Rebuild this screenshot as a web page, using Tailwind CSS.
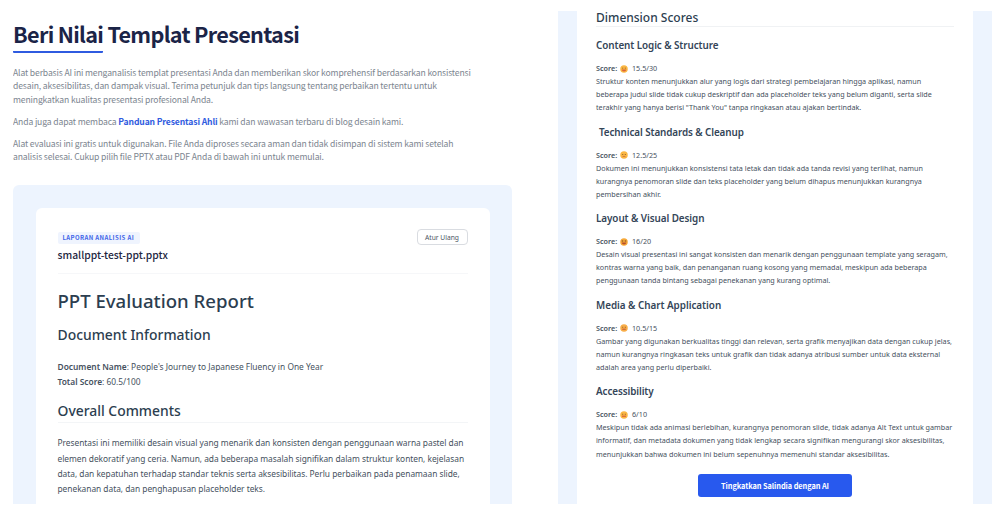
<!DOCTYPE html>
<html lang="id">
<head>
    <meta charset="UTF-8">
    <meta name="viewport" content="width=device-width, initial-scale=1.0">
    <title>Beri Nilai Templat Presentasi</title>
    <script src="https://cdn.jsdelivr.net/npm/@tailwindcss/browser@4"></script>
</head>
<body class="bg-white w-[1000px] h-[512px] overflow-hidden flex font-['Noto_Sans',sans-serif] text-[#46515e] whitespace-nowrap">
    <!-- Kolom kiri -->
    <main class="w-[499px] h-[504px] ml-[13px] flex flex-col overflow-hidden">
        <section class="h-[185px] shrink-0 pt-[18px] font-['Noto_Sans_CJK_SC',sans-serif]">
            <h1 class="flex text-[21.6px] leading-[32px] font-bold tracking-[-0.68px] text-[#1b2447]">
                <span class="h-[35px] border-b-[2px] border-[#2f5be0] rounded-b-[1px]">Beri Nilai</span><span class="whitespace-pre"> Templat Presentasi</span>
            </h1>
            <div class="mt-[13px] text-[8.6px] leading-[13.4px] tracking-[-0.135px] text-[#7c858f]">
                <p>Alat berbasis AI ini menganalisis templat presentasi Anda dan memberikan skor komprehensif berdasarkan konsistensi<br>desain, aksesibilitas, dan dampak visual. Terima petunjuk dan tips langsung tentang perbaikan tertentu untuk<br>meningkatkan kualitas presentasi profesional Anda.</p>
                <p class="mt-[8.6px]">Anda juga dapat membaca <a href="#" class="font-bold text-[#2f5be0]">Panduan Presentasi Ahli</a> kami dan wawasan terbaru di blog desain kami.</p>
                <p class="mt-[8.6px]">Alat evaluasi ini gratis untuk digunakan. File Anda diproses secara aman dan tidak disimpan di sistem kami setelah<br>analisis selesai. Cukup pilih file PPTX atau PDF Anda di bawah ini untuk memulai.</p>
            </div>
        </section>
        <section class="flex-1 bg-[#edf4fe] rounded-t-[6px] pt-[23px] px-[22.5px]">
            <div class="h-full bg-white rounded-t-[6px] pt-[21px] px-[22px]">
                <header class="h-[45px] flex justify-between border-b border-[#f6f7f9]">
                    <div class="font-['Noto_Sans_CJK_SC',sans-serif]">
                        <div class="mt-[3px] w-[82px] h-[12px] pl-[5px] rounded-[2px] bg-[#eff4fe] text-[6px] leading-[12px] font-bold tracking-[0.4px] text-[#3f66e8]">LAPORAN ANALISIS AI</div>
                        <div class="mt-[3px] text-[10.3px] leading-[16px] font-medium text-[#23263f]">smallppt-test-ppt.pptx</div>
                    </div>
                    <button class="w-[51px] h-[16px] rounded-[4px] border border-[#d9dce1] text-[6.7px] leading-[13px] text-[#4b5563]">Atur Ulang</button>
                </header>
                <h2 class="mt-[13px] text-[18.6px] leading-[28px] font-medium text-[#2c3e50]">PPT Evaluation Report</h2>
                <h3 class="mt-[9px] h-[24px] text-[13.9px] leading-[22px] font-medium text-[#2c3e50]">Document Information</h3>
                <p class="mt-[11px] text-[8.4px] leading-[15.2px]"><b class="font-semibold">Document Name</b>: People's Journey to Japanese Fluency in One Year<br><b class="font-semibold">Total Score</b>: 60.5/100</p>
                <h3 class="mt-[11px] h-[23px] border-b border-[#f3f5f7] text-[13.9px] leading-[22px] font-medium text-[#2c3e50]">Overall Comments</h3>
                <p class="mt-[12px] text-[8.4px] leading-[15.2px] tracking-[-0.03px]">Presentasi ini memiliki desain visual yang menarik dan konsisten dengan penggunaan warna pastel dan<br>elemen dekoratif yang ceria. Namun, ada beberapa masalah signifikan dalam struktur konten, kejelasan<br>data, dan kepatuhan terhadap standar teknis serta aksesibilitas. Perlu perbaikan pada penamaan slide,<br>penekanan data, dan penghapusan placeholder teks.</p>
            </div>
        </section>
    </main>

    <!-- Kolom kanan -->
    <aside class="w-[434px] h-[493px] ml-[46px] mt-[11px] px-[19px] bg-[#edf4fe]">
        <div class="h-full bg-white px-[19px] flex flex-col">
            <h2 class="h-[16px] shrink-0 border-b border-[#f0f2f4] text-[12px] leading-[13px] font-medium text-[#2c3e50]">Dimension Scores</h2>

            <article class="mt-[9px] h-[86.6px] shrink-0">
                <h3 class="text-[9.9px] leading-[18px] font-semibold tracking-[-0.08px] text-[#344558]">Content Logic &amp; Structure</h3>
                <div class="mt-[8px] h-[13px] flex items-center text-[7.2px] leading-[13px]"><b class="w-[24px] font-semibold">Score:</b>
                    <svg class="w-[8px] h-[8px] mr-[4px]" viewBox="0 0 16 16"><circle cx="8" cy="8" r="7.5" fill="#fbb743"/><path d="M4 6.3h2.5M9.5 6.3H12" stroke="#93602a" stroke-width="1.6"/><path d="M3.5 9h9c-.3 5-8.7 5-9 0z" fill="#d9623a"/></svg>15.5/30</div>
                <p class="text-[7.2px] leading-[13.1px]">Struktur konten menunjukkan alur yang logis dari strategi pembelajaran hingga aplikasi, namun<br>beberapa judul slide tidak cukup deskriptif dan ada placeholder teks yang belum diganti, serta slide<br>terakhir yang hanya berisi "Thank You" tanpa ringkasan atau ajakan bertindak.</p>
            </article>
            <article class="h-[86.6px] shrink-0">
                <h3 class="pl-[3px] text-[9.9px] leading-[18px] font-semibold tracking-[-0.1px] text-[#344558]">Technical Standards &amp; Cleanup</h3>
                <div class="mt-[8px] h-[13px] flex items-center text-[7.2px] leading-[13px]"><b class="w-[24px] font-semibold">Score:</b>
                    <svg class="w-[8px] h-[8px] mr-[4px]" viewBox="0 0 16 16"><circle cx="8" cy="8" r="7.5" fill="#fbb743"/><path d="M4 7h2.5M9.5 7H12" stroke="#93602a" stroke-width="1.6"/><path d="M5 11.5q3-2 6 0" fill="none" stroke="#c8683a" stroke-width="1.6"/></svg>12.5/25</div>
                <p class="text-[7.2px] leading-[13.1px] tracking-[0.015px]">Dokumen ini menunjukkan konsistensi tata letak dan tidak ada tanda revisi yang terlihat, namun<br>kurangnya penomoran slide dan teks placeholder yang belum dihapus menunjukkan kurangnya<br>pembersihan akhir.</p>
            </article>
            <article class="h-[86.6px] shrink-0">
                <h3 class="text-[9.9px] leading-[18px] font-semibold tracking-[-0.07px] text-[#344558]">Layout &amp; Visual Design</h3>
                <div class="mt-[8px] h-[13px] flex items-center text-[7.2px] leading-[13px]"><b class="w-[24px] font-semibold">Score:</b>
                    <svg class="w-[8px] h-[8px] mr-[4px]" viewBox="0 0 16 16"><circle cx="8" cy="8" r="7.5" fill="#f6a838"/><path d="M3.5 6h3M9.5 6h3" stroke="#70431c" stroke-width="2"/><path d="M3.5 9h9c-.3 5-8.7 5-9 0z" fill="#b84e2c"/></svg>16/20</div>
                <p class="text-[7.2px] leading-[13.1px]">Desain visual presentasi ini sangat konsisten dan menarik dengan penggunaan template yang seragam,<br>kontras warna yang baik, dan penanganan ruang kosong yang memadai, meskipun ada beberapa<br>penggunaan tanda bintang sebagai penekanan yang kurang optimal.</p>
            </article>
            <article class="h-[86.6px] shrink-0">
                <h3 class="text-[9.9px] leading-[18px] font-semibold tracking-[-0.03px] text-[#344558]">Media &amp; Chart Application</h3>
                <div class="mt-[8px] h-[13px] flex items-center text-[7.2px] leading-[13px]"><b class="w-[24px] font-semibold">Score:</b>
                    <svg class="w-[8px] h-[8px] mr-[4px]" viewBox="0 0 16 16"><circle cx="8" cy="8" r="7.5" fill="#f8ad48"/><path d="M4 6.5h2.5M9.5 6.5H12" stroke="#93602a" stroke-width="1.6"/><path d="M4.5 10.5h7" stroke="#cc6238" stroke-width="2.4"/></svg>10.5/15</div>
                <p class="text-[7.2px] leading-[13.1px] tracking-[0.01px]">Gambar yang digunakan berkualitas tinggi dan relevan, serta grafik menyajikan data dengan cukup jelas,<br>namun kurangnya ringkasan teks untuk grafik dan tidak adanya atribusi sumber untuk data eksternal<br>adalah area yang perlu diperbaiki.</p>
            </article>
            <article class="h-[92px] shrink-0">
                <h3 class="text-[9.9px] leading-[18px] font-semibold tracking-[-0.1px] text-[#344558]">Accessibility</h3>
                <div class="mt-[8px] h-[13px] flex items-center text-[7.2px] leading-[13px]"><b class="w-[24px] font-semibold">Score:</b>
                    <svg class="w-[8px] h-[8px] mr-[4px]" viewBox="0 0 16 16"><circle cx="8" cy="8" r="7.5" fill="#fbb743"/><path d="M4 6.5h2.5M9.5 6.5H12" stroke="#93602a" stroke-width="1.6"/><path d="M4 10.5h8" stroke="#d9623a" stroke-width="2.4"/></svg>6/10</div>
                <p class="text-[7.2px] leading-[13.1px] tracking-[0.01px]">Meskipun tidak ada animasi berlebihan, kurangnya penomoran slide, tidak adanya Alt Text untuk gambar<br>informatif, dan metadata dokumen yang tidak lengkap secara signifikan mengurangi skor aksesibilitas,<br>menunjukkan bahwa dokumen ini belum sepenuhnya memenuhi standar aksesibilitas.</p>
            </article>
            <button class="self-center w-[154px] h-[23px] shrink-0 rounded-[3px] bg-[#2859ee] text-white font-['Noto_Sans_CJK_SC',sans-serif] text-[7.4px] tracking-[-0.08px] font-bold">Tingkatkan Salindia dengan AI</button>
        </div>
    </aside>
</body>
</html>
